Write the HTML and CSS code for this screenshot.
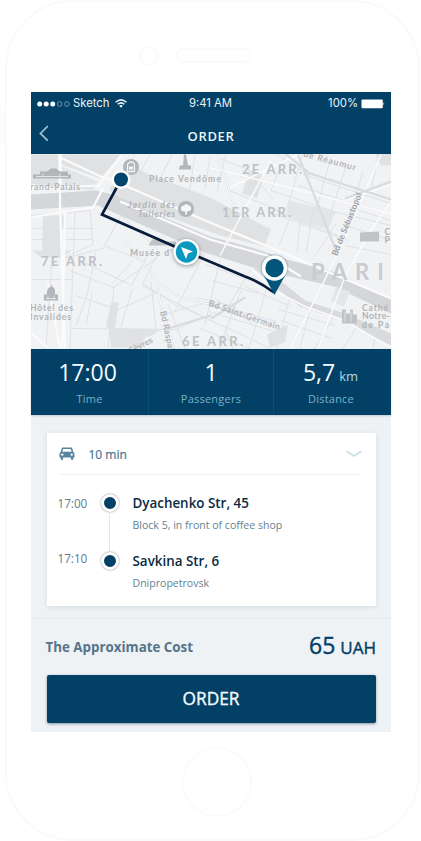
FILE: index.html
```html
<!DOCTYPE html>
<html lang="en">
<head>
<meta charset="utf-8">
<title>Order</title>
<link rel="stylesheet" href="styles.css">
</head>
<body>
<div class="phone">
  <i class="side-key"></i>
  <div class="phone-top"><i class="camera"></i><i class="speaker"></i></div>
  <main class="screen">
    <header class="bar">
      <div class="status">
        <div class="carrier">
          <svg class="signal" width="33" height="6" viewBox="0 0 33 6"><g fill="#fff"><circle cx="2.7" cy="3" r="2.5"/><circle cx="9.2" cy="3" r="2.5"/><circle cx="15.7" cy="3" r="2.5"/></g><g fill="none" stroke="#6fa3b9" stroke-width=".9"><circle cx="22.7" cy="3" r="2.3"/><circle cx="29.9" cy="3" r="2.3"/></g></svg>
          <span>Sketch</span>
          <svg class="wifi" width="12" height="9" viewBox="0 0 12 9"><g fill="none" stroke="#e6f5fa" stroke-width="1.5"><path d="M.6 3.2Q6-1.5 11.4 3.2"/><path d="M2.7 5.3Q6 2.5 9.3 5.3"/></g><path d="M4.2 6.8Q6 5.4 7.8 6.8L6 8.8Z" fill="#e6f5fa"/></svg>
        </div>
        <span class="clock">9:41 AM</span>
        <div class="power"><span>100%</span>
          <svg width="24" height="10" viewBox="0 0 24 10"><rect x=".5" y=".6" width="21.3" height="8.6" rx="1" fill="#fff"/><path d="M22.5 3.3Q24 4.9 22.5 6.5Z" fill="#fff"/></svg>
        </div>
      </div>
      <div class="nav">
        <svg class="back" width="10" height="17" viewBox="0 0 10 17"><path d="M8.8 1.2 1.4 8.4 8.8 15.6" fill="none" stroke="#9dbdcb" stroke-width="1.7"/></svg>
        <h1>ORDER</h1>
      </div>
    </header>
    <svg class="map" width="360" height="195" viewBox="31 153.5 360 195">
      <rect x="31" y="153" width="360" height="196" fill="#f0f2f4"/>
      <g fill="#dfe1e3">
        <path d="M31 154H58V188L31 183ZM62 154H121L100 178 62 164Z"/>
        <path d="M62 166 98 181 93 190 62 186Z" fill="#e3e5e7"/>
        <path d="M109 189 127 163 145 172 210 197 271 229 264 246 220 235 118 198Z"/>
        <path d="M31 194 96 190 116 195 160 215 210 236 252 247 290 260 330 270 391 299V313L334 286 290 276 250 266 205 252 150 228 98 205 31 209Z" fill="#d4d6d9"/>
        <path d="M263 266 279 279 305 300 345 313 391 333V345L340 319 300 306 278 289 253 267Z" fill="#d8dadd"/>
        <path d="M249 171 264 174 257 198 242 193Z"/>
        <path d="M288 200 336 211 328 229 286 216ZM336 286 350 291 344 306 331 301Z" fill="#e3e5e7"/>
        <path d="M43 215H66V228H62V250H42ZM32 250H72L62 257H41ZM111 302H119L115 327H106ZM109 327 150 329 139 347H111ZM145 328 162 329 148 337ZM267 334 288 324 285 342 270 347ZM381 165H391V153H375Z"/>
      </g>
      <g fill="none" stroke="#dfe1e4" stroke-width="1">
        <path d="M31 215 90 210 93 244 62 258M75 211 70 348M55 211 46 348M31 228H93M31 239H91M63 258 103 248 121 215 158 249M78 259 132 285 148 253M96 251 87 295 76 325M70 270 113 287 157 258M76 295 118 309 157 292M31 279H72M72 328 175 329 211 314M92 293 86 324M132 289 121 326M133 260 112 283M159 250 143 283 176 305M151 282 156 328M106 246 145 261M114 286 108 348M142 285 205 317M168 304 185 348"/>
        <path d="M210 156 205 188M226 153 217 190M275 153 310 175M286 153 271 190M303 153 289 201M330 160 316 210M347 163 330 215M363 171 347 225M379 153 370 193M210 166 258 181 273 199M220 158 253 171M229 190 265 204 293 218 338 235M271 190 337 212 391 225M303 174 345 188 391 203M298 185 362 206M300 222 297 252M314 207 306 252M273 213 348 240M336 223 315 256M290 218 279 244M349 226 391 240M345 245 391 254M350 207 391 220M135 154 127 168M150 154 140 172M172 154 160 178M195 154 190 188"/>
        <path d="M205 252 174 312M220 259 205 324M250 270 229 305M212 280 258 293M206 264 250 280M196 297 235 306M180 306 244 335 270 348M241 290 219 348M266 290 249 348M289 299 277 348M310 309 300 348M334 315 315 348M358 325 343 348M209 311 274 331M278 309 335 325M281 320 332 338M200 328 249 348M225 329 233 348M245 286 291 306M228 308 276 321M380 313 373 347M215 298 253 323M167 313 211 301"/>
      </g>
      <g fill="none" stroke="#fbfbfc" stroke-width="2.2">
        <path d="M60 153V205L65 348M60 157 103 177 127 186M103 188 93 207 59 212 31 217M121 155 99 185 31 188M127 186 210 222 268 246 391 298M120 201 163 219 210 239 267 255 301 276M31 333 48 347M65 211 62 348M48 283 60 348"/>
        <path d="M381 154 338 253 290 348M391 201 370 231 345 276 318 348M300 153 230 187M271 160 220 255M345 200 391 184M210 167 391 213" stroke-width="1.5"/>
        <path d="M253 270 278 292 305 306 345 320 391 347" stroke-width="1.5"/>
      </g>
      <g fill="none" stroke="#d9dbde" stroke-width="2.2">
        <path d="M123 239 145 264 157 282 180 297 211 304 250 319M157 282 162 310 174 348M217 154 235 207M298 154 336 250M211 318 245 297M345 198 391 181M285 153 310 173 391 199M168 328 211 315"/>
      </g>
      <g fill="none" stroke="#fbfbfc" stroke-width="1.2">
        <path d="M123 239 145 264 157 282 180 297 211 304M157 282 162 310 174 348M217 154 235 207"/>
      </g>
      <g fill="#b2b5b9">
        <circle cx="131" cy="166.5" r="8"/><path d="M127.5 171V165A3.5 3.5 0 0 1 134.5 165V171Z" fill="none" stroke="#f5f5f6" stroke-width="1.3"/><path d="M129 166H133V169H129Z" fill="#f5f5f6"/>
        <circle cx="186" cy="208.5" r="8"/><path d="M185.3 214V211Q180 211 181 207.5 181 205 184 205 186 202 189 205 192 206 191 209 190 211 187 211V214Z" fill="#f7f7f7"/>
        <path d="M33 178V174H40V171H47L51 168H56L60 171H68V174H71V178ZM179 169 180 165H183L184 154H186L188 165H191V169Z"/>
        <path d="M44 300V294H47V291Q48 287 51 286V284.5H52V286Q55 287 55 291V294H58V300Z"/><path d="M149 244 152 239H163L164 241H176V245H149ZM360 232 379 231V241H360ZM342 323V309H346V313H350V309H353V314H357V323Z" fill="#bfc2c6"/>
        <path d="M46 298H56M48 295V299M54 295V299M345 311V321M351 311V321M36 176H68M43 173V177M60 173V177" fill="none" stroke="#e2e4e6" stroke-width="1"/>
      </g>
      <g class="label">
        <text x="30" y="189.5" textLength="50">rand-Palais</text>
        <text x="149" y="181" textLength="72">Place Vendôme</text>
        <g class="garden"><text x="128" y="207.5" textLength="47">Jardin des</text><text x="138" y="216" textLength="37">Tuileries</text></g>
        <text x="130" y="255" textLength="42">Musée d'</text>
        <text x="30" y="310.5" textLength="43">Hôtel des</text><text x="30" y="319" textLength="41">Invalides</text>
        <text x="362" y="310" textLength="26">Cathé</text><text x="362" y="318.5" textLength="28">Notre-</text><text x="362" y="327" textLength="27">de Pa</text>
        <text x="384.5" y="234">C</text><text x="384.5" y="242.5">P</text>
        <text transform="translate(303 156) rotate(15)" textLength="54">ue Réaumur</text>
        <text class="street" transform="translate(337 256) rotate(-68)" textLength="67">Bd de Sébastopol</text>
        <text transform="translate(208 305) rotate(19)" textLength="75">Bd Saint-Germain</text>
        <text transform="translate(160 311) rotate(78)" textLength="43">Bd Raspail</text>
        <text transform="translate(131 353) rotate(-27)">Sèvres</text>
      </g>
      <g class="district">
        <text x="242" y="173.5" textLength="60">2E ARR.</text><text x="222" y="216.5" textLength="69">1ER ARR.</text>
        <text x="41" y="265.5" textLength="61">7E ARR.</text><text x="182" y="345" textLength="61">6E ARR.</text>
        <text class="city" x="311" y="279.5" textLength="93">PARIS</text>
      </g>
      <path d="M121 179 102 214 186 251 245 276Q259 281 274 292" fill="none" stroke="#071c3a" stroke-width="2.7"/>
      <circle cx="121" cy="179" r="9.5" fill="#fff"/><circle cx="121" cy="179" r="7" fill="#03456d"/>
      <g class="shade"><circle cx="186.5" cy="251.5" r="13" fill="#fff"/><circle cx="186.5" cy="251.5" r="10.7" fill="#0999bf"/><path d="M181 246.5 193 251 188 253 186 258.5Z" fill="#fff"/></g>
      <path d="M264 275 274.5 294.5 285 275Z" fill="#045579"/>
      <circle class="ring" cx="274.5" cy="267.5" r="12.7" fill="#fff"/><circle cx="274.5" cy="267.5" r="9.2" fill="#045579"/>
    </svg>
    <section class="stats">
      <div><strong>17:00</strong><span>Time</span></div>
      <div><strong>1</strong><span>Passengers</span></div>
      <div class="distance"><strong>5,7<small>km</small></strong><span>Distance</span></div>
    </section>
    <section class="trip">
      <article class="card">
        <div class="ride">
          <svg width="16" height="14" viewBox="0 0 16 14"><path fill="#56859b" fill-rule="evenodd" d="M3.9.5H12.1Q13 .5 13.3 1.4L14.3 5.1Q15.5 5.8 15.5 7.2V10.5H14.3V12Q14.3 13.1 13.1 13.1T11.9 12V10.5H4.1V12Q4.1 13.1 2.9 13.1T1.7 12V10.5H.5V7.2Q.5 5.8 1.7 5.1L2.7 1.4Q3 .5 3.9.5ZM4.2 1.9 3.4 4.8H12.6L11.8 1.9ZM3.3 6.4A1.2 1.2 0 1 0 3.3 8.8 1.2 1.2 0 1 0 3.3 6.4ZM12.7 6.4A1.2 1.2 0 1 0 12.7 8.8 1.2 1.2 0 1 0 12.7 6.4Z"/></svg>
          <span>10 min</span>
          <svg class="chevron" width="16" height="8" viewBox="0 0 16 8"><path d="M.6 1.2 8 5.9 15.4 1.2" fill="none" stroke="#cbdde5" stroke-width="1.7"/></svg>
        </div>
        <div class="stop first"><time>17:00</time><i class="dot"></i><div><h2>Dyachenko Str, 45</h2><p>Block 5, in front of coffee shop</p></div></div>
        <div class="stop"><time>17:10</time><i class="dot"></i><div><h2>Savkina Str, 6</h2><p>Dnipropetrovsk</p></div></div>
      </article>
    </section>
    <footer class="checkout">
      <div class="cost"><span>The Approximate Cost</span><strong>65 <small>UAH</small></strong></div>
      <button class="order" type="button">ORDER</button>
    </footer>
  </main>
  <i class="home"></i>
</div>
</body>
</html>
```

FILE: styles.css
```css
* { box-sizing: border-box; }
body { margin: 0; background: #fff; font-family: "Open Sans", "Noto Sans", sans-serif; overflow: hidden; }
h1, h2, p { margin: 0; }
svg { display: block; flex: none; }
.phone { position: relative; width: 415px; height: 841px; margin-left: 5px; padding: 0 26px; border: 2px solid #fafafa; border-radius: 68px; }
.side-key { position: absolute; left: -7px; top: 104px; width: 5px; height: 40px; background: #fcfcfc; }
.phone-top { height: 90px; display: flex; padding: 44px 0 0 106px; gap: 17px; }
.camera { width: 20px; height: 20px; border: 2px solid #fafafa; border-radius: 50%; }
.speaker { width: 75px; height: 15px; margin-top: 2px; border: 2px solid #fafafa; border-radius: 8px; }
.screen { width: 360px; height: 640px; margin-left: -2px; background: #eef2f5; display: flex; flex-direction: column; }
.bar { height: 61.5px; background: #034066; color: #eaf5fa; }
.status { height: 22px; display: grid; grid-template-columns: 1fr auto 1fr; align-items: center; padding: 1px 6px 0 6px; font: 11.3px/13px Inter, sans-serif; }
.carrier, .power { display: flex; align-items: center; }
.carrier span { margin-left: 3px; }
.clock { margin-left: -1px; }
.wifi { margin-left: 5px; }
.power { justify-content: flex-end; gap: 3px; }
.nav { height: 39px; display: grid; grid-template-columns: 80px 1fr 80px; align-items: center; padding: 0 8px; }
h1 { font-size: 13px; line-height: 18px; font-weight: 600; text-align: center; letter-spacing: .65px; padding-top: 5px; }
.map { width: 360px; height: 195px; }
.label { font: 700 8.6px Lato, sans-serif; fill: #b0b3b7; }
.garden { font-style: italic; }
.street { fill: #a0a3a8; }
.district { font: 700 13px Lato, sans-serif; fill: #bec1c5; }
.city { font-size: 22px; fill: #c8cbcf; }
.shade { filter: drop-shadow(0 1px 2px #0006); }
.ring { filter: drop-shadow(0 0 1px #045579aa); }
.stats { height: 66.5px; flex: none; display: grid; grid-template-columns: 117px 125px 118px; background: #034066; box-shadow: 0 1px 2px #00304d33; }
.stats div { display: flex; flex-direction: column; align-items: center; padding-top: 8px; border-left: 1px solid #075073; }
.stats div:first-child { border-left: 0; }
.stats div:first-child strong { margin-left: -4px; }
.stats strong { height: 30px; font-size: 23px; line-height: 30px; font-weight: 400; color: #f4fbff; }
.stats .distance strong { margin-left: -4px; }
.stats small { font-size: 13px; line-height: 1; color: #b1d7e5; margin-left: 4px; }
.stats span { font-size: 11px; line-height: 16px; margin-top: 4px; color: #77b2c9; letter-spacing: .23px; }
.stats .distance span { margin-left: -3px; }
.trip { height: 203.5px; flex: none; padding: 18px 15px 0 15.5px; border-bottom: 1px solid #e4ebee; }
.card { height: 173px; padding: 0 14px 0 12px; background: #fff; box-shadow: 0 1px 5px #28495c22; }
.ride { height: 42px; display: flex; align-items: center; border-bottom: 1px solid #f1f3f4; padding-top: 1px; color: #47758c; font-size: 12px; }
.ride span { margin-left: 14px; -webkit-text-stroke: .2px; }
.chevron { margin-left: auto; }
.stop { height: 58px; display: grid; grid-template-columns: 42px 20px 1fr; }
.stop.first { margin-top: 19px; }
.stop time { font-size: 11.7px; line-height: 16px; color: #607b8e; padding-top: 1px; margin-left: -1px; }
.stop:not(.first) time { padding-top: 0; margin-top: -2px; }
.dot { position: relative; width: 18px; height: 18px; border: 3px solid #fff; border-radius: 50%; background: #034066; box-shadow: 0 0 2px #0008; }
.first .dot::after { content: ""; position: absolute; left: 5px; top: 15px; width: 1px; height: 40px; background: #dfe9ec; }
.stop > div { padding-left: 12px; white-space: nowrap; }
h2 { font-size: 13.4px; line-height: 18px; font-weight: 600; color: #092b43; }
.stop p { font-size: 10.55px; line-height: 14px; margin-top: 6px; color: #647f91; }
.checkout { padding: 0 15px 0 15.5px; }
.cost { height: 56px; display: flex; align-items: center; justify-content: space-between; color: #547489; font-size: 13.35px; font-weight: 700; }
.cost span { margin-left: -1px; }
.cost strong { font-size: 23px; line-height: 30px; font-weight: 400; color: #034066; -webkit-text-stroke: .4px; }
.cost small { font-size: 17px; margin-left: -1px; }
.order { display: block; width: 329px; height: 48px; padding: 0; border: 0; border-radius: 2px; background: #034066; color: #f3faff; font: 400 17.3px/24px "Open Sans", sans-serif; -webkit-text-stroke: .35px; box-shadow: 0 1px 3px #002d4a77; }
.home { display: block; width: 70px; height: 70px; margin: 15px 0 0 149px; border: 2px solid #fbfbfb; border-radius: 50%; }
```
